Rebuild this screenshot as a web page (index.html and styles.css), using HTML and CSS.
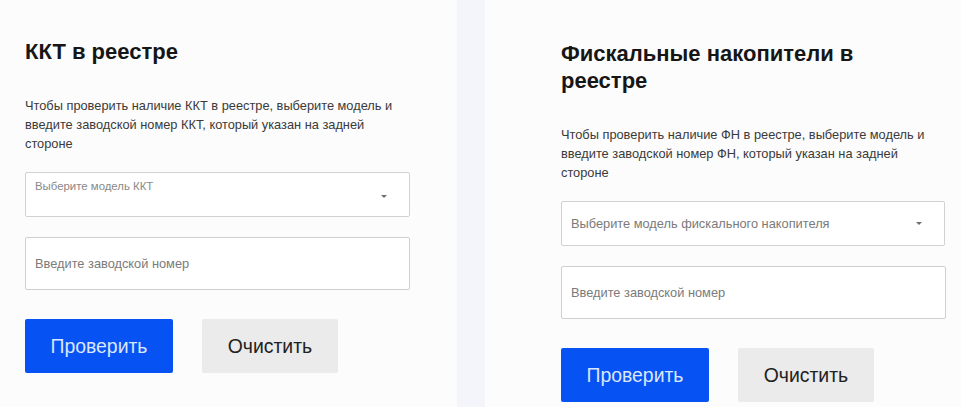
FILE: index.html
```html
<!DOCTYPE html>
<html lang="ru">
<head>
<meta charset="utf-8">
<title>Реестр</title>
<link rel="stylesheet" href="styles.css">
</head>
<body>
<div class="page">
  <section class="card card-left">
    <h2 class="title">ККТ в реестре</h2>
    <p class="desc">Чтобы проверить наличие ККТ в реестре, выберите модель и введите заводской номер ККТ, который указан на задней стороне</p>
    <div class="select select-label">
      <span class="label">Выберите модель ККТ</span>
      <span class="arrow"></span>
    </div>
    <div class="input"><span class="ph">Введите заводской номер</span></div>
    <div class="buttons">
      <button class="btn btn-primary">Проверить</button>
      <button class="btn btn-secondary">Очистить</button>
    </div>
  </section>
  <div class="gutter"></div>
  <section class="card card-right">
    <h2 class="title">Фискальные накопители в реестре</h2>
    <p class="desc">Чтобы проверить наличие ФН в реестре, выберите модель и введите заводской номер ФН, который указан на задней стороне</p>
    <div class="select select-center">
      <span class="ph">Выберите модель фискального накопителя</span>
      <span class="arrow"></span>
    </div>
    <div class="input"><span class="ph">Введите заводской номер</span></div>
    <div class="buttons">
      <button class="btn btn-primary">Проверить</button>
      <button class="btn btn-secondary">Очистить</button>
    </div>
  </section>
</div>
</body>
</html>
```
FILE: styles.css
```css
html, body {
  margin: 0;
  padding: 0;
  background: #fcfcfc;
}
body {
  font-family: "Liberation Sans", Arial, sans-serif;
  color: #1a1a1a;
}
.page {
  display: flex;
  width: 961px;
  height: 407px;
  overflow: hidden;
}
.card {
  background: #fcfcfc;
  display: flex;
  flex-direction: column;
  box-sizing: border-box;
}
.card-left {
  width: 457px;
  padding: 38px 0 0 25px;
}
.card-right {
  flex: 1;
  padding: 40px 0 0 76px;
}
.gutter {
  width: 28px;
  background: #f3f5fb;
}
.title {
  margin: 0;
  font-size: 22px;
  line-height: 27px;
  font-weight: 700;
  color: #161616;
  width: 330px;
}
.desc {
  margin: 31px 0 0 0;
  font-size: 12.8px;
  line-height: 19px;
  color: #3a3a3a;
  width: 385px;
}
.select {
  margin-top: 19px;
  width: 385px;
  height: 45px;
  box-sizing: border-box;
  border: 1px solid #d2d2d2;
  background: #fff;
  border-radius: 2px;
  display: flex;
  padding: 0 22px 0 9px;
}
.card-right .select { width: 384px; }
.select-label {
  align-items: flex-start;
  justify-content: space-between;
}
.select-label .label {
  font-size: 11.4px;
  color: #888;
  margin-top: 7px;
}
.select-label .arrow {
  margin-top: 22px;
}
.select-center {
  align-items: center;
  justify-content: space-between;
}
.arrow {
  width: 0;
  height: 0;
  border-left: 3px solid transparent;
  border-right: 3px solid transparent;
  border-top: 3px solid #6f6f6f;
}
.ph {
  font-size: 12.8px;
  color: #7a7a7a;
}
.input {
  margin-top: 20px;
  width: 385px;
  height: 53px;
  box-sizing: border-box;
  border: 1px solid #cfcfcf;
  background: #fff;
  border-radius: 2px;
  display: flex;
  align-items: center;
  padding: 0 9px;
}
.buttons {
  margin-top: 29px;
  display: flex;
  gap: 29px;
}
.btn {
  height: 54px;
  border: 0;
  border-radius: 2px;
  font-family: "Liberation Sans", Arial, sans-serif;
  font-size: 19.4px;
  padding: 0;
}
.btn-primary {
  width: 148px;
  background: #0652f2;
  color: #dbe6ff;
}
.btn-secondary {
  width: 136px;
  background: #ebebeb;
  color: #222;
}
```
